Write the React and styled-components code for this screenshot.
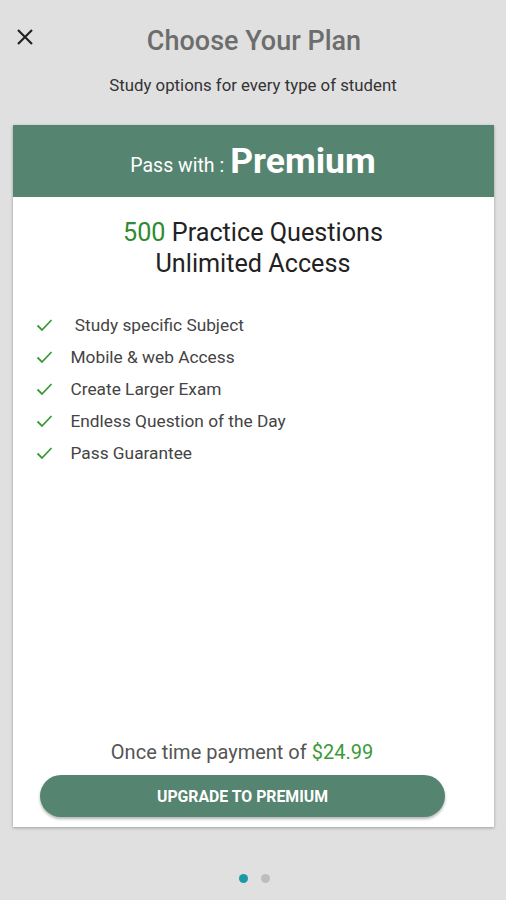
import React from 'react'
import styled, { createGlobalStyle } from 'styled-components'

const GlobalStyle = createGlobalStyle`
  html, body {
    margin: 0;
    padding: 0;
    background: #e0e0e0;
    font-family: Roboto, "Liberation Sans", sans-serif;
  }
`

const green = '#558470'

const Screen = styled.div`
  width: 506px;
  height: 900px;
  display: flex;
  flex-direction: column;
  align-items: center;
  box-sizing: border-box;
`

const TopBar = styled.div`
  position: relative;
  width: 100%;
  height: 82px;
  display: flex;
  justify-content: center;
  align-items: center;
`

const Close = styled.button`
  position: absolute;
  left: 10px;
  top: 22px;
  width: 30px;
  height: 30px;
  padding: 0;
  border: none;
  background: none;
  display: flex;
  align-items: center;
  justify-content: center;
`

const Title = styled.h1`
  margin: 0 0 0 2px;
  font-size: 27px;
  font-weight: 500;
  color: #6d6d6d;
`

const Subtitle = styled.p`
  margin: -7px 0 0;
  font-size: 16.8px;
  color: #333;
`

const Card = styled.div`
  margin-top: 30px;
  width: 481px;
  height: 702px;
  background: #fff;
  box-shadow: 0 1px 3px rgba(0, 0, 0, 0.3);
  display: flex;
  flex-direction: column;
  align-items: center;
`

const CardHead = styled.div`
  width: 100%;
  height: 72px;
  background: ${green};
  color: #fff;
  display: flex;
  justify-content: center;
  align-items: center;
  gap: 6px;
  box-sizing: border-box;
`

const PassWith = styled.span`
  font-size: 19.5px;
  margin-top: 9px;
`

const Plan = styled.span`
  font-size: 35.5px;
  font-weight: 700;
`

const Headline = styled.div`
  margin-top: 20px;
  font-size: 25.2px;
  line-height: 31px;
  color: #222;
  text-align: center;
`

const Accent = styled.span`
  color: ${p => p.$color || '#2e8b2e'};
`

const Features = styled.ul`
  list-style: none;
  margin: 35px 0 0;
  padding: 0 0 0 23px;
  align-self: stretch;
  display: flex;
  flex-direction: column;
  gap: 10px;
`

const Feature = styled.li`
  display: flex;
  align-items: center;
  gap: 18px;
  height: 22px;
  font-size: 17.3px;
  color: #444;
`

const Spacer = styled.div`
  flex: 1;
`

const Payment = styled.div`
  font-size: 20px;
  color: #555;
  margin: 0 22px 11px 0;
`

const Upgrade = styled.button`
  width: 405px;
  height: 42px;
  margin: 0 0 10px -21px;
  border: none;
  border-radius: 21px;
  background: ${green};
  color: #fff;
  font-family: inherit;
  font-size: 15.8px;
  font-weight: 700;
  box-shadow: 0 2px 3px rgba(0, 0, 0, 0.3);
`

const Dots = styled.div`
  margin-top: 47px;
  display: flex;
  gap: 13px;
  margin-left: 2px;
`

const Dot = styled.span`
  width: 9px;
  height: 9px;
  border-radius: 50%;
  background: ${p => (p.$active ? '#1a9aa6' : '#bdbdbd')};
`

const Check = () => (
  <svg width="17" height="14" viewBox="0 0 17 14">
    <path d="M1.5 7.5 L6 12 L15.5 2" fill="none" stroke="#3a9a3a" strokeWidth="1.8" />
  </svg>
)

const features = [
  '\u00a0Study specific Subject',
  'Mobile & web Access',
  'Create Larger Exam',
  'Endless Question of the Day',
  'Pass Guarantee',
]

export default function App() {
  return (
    <Screen>
      <GlobalStyle />
      <TopBar>
        <Close aria-label="close">
          <svg width="20" height="20" viewBox="0 0 20 20">
            <path d="M3 3 L17 17 M17 3 L3 17" stroke="#222" strokeWidth="2.2" />
          </svg>
        </Close>
        <Title>Choose Your Plan</Title>
      </TopBar>
      <Subtitle>Study options for every type of student</Subtitle>
      <Card>
        <CardHead>
          <PassWith>Pass with :</PassWith>
          <Plan>Premium</Plan>
        </CardHead>
        <Headline>
          <Accent>500</Accent> Practice Questions
          <br />
          Unlimited Access
        </Headline>
        <Features>
          {features.map(f => (
            <Feature key={f}>
              <Check />
              {f}
            </Feature>
          ))}
        </Features>
        <Spacer />
        <Payment>
          Once time payment of <Accent $color="#3a9a3a">$24.99</Accent>
        </Payment>
        <Upgrade>UPGRADE TO PREMIUM</Upgrade>
      </Card>
      <Dots>
        <Dot $active />
        <Dot />
      </Dots>
    </Screen>
  )
}
